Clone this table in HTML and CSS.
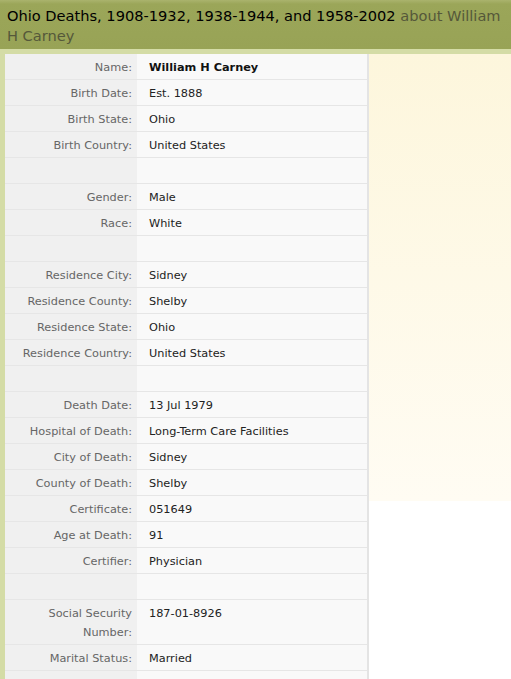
FILE: index.html
```html
<!DOCTYPE html>
<html>
<head>
<meta charset="utf-8">
<link rel="stylesheet" href="styles.css">
</head>
<body>
<h1 class="title"><span class="coll">Ohio Deaths, 1908-1932, 1938-1944, and 1958-2002</span> <span class="about">about William</span> <span class="about">H Carney</span></h1>
<div class="main">
  <table class="record">
    <tr><th>Name:</th><td class="name">William H Carney</td></tr>
    <tr><th>Birth Date:</th><td>Est. 1888</td></tr>
    <tr><th>Birth State:</th><td>Ohio</td></tr>
    <tr><th>Birth Country:</th><td>United States</td></tr>
    <tr class="blank"><th></th><td></td></tr>
    <tr><th>Gender:</th><td>Male</td></tr>
    <tr><th>Race:</th><td>White</td></tr>
    <tr class="blank"><th></th><td></td></tr>
    <tr><th>Residence City:</th><td>Sidney</td></tr>
    <tr><th>Residence County:</th><td>Shelby</td></tr>
    <tr><th>Residence State:</th><td>Ohio</td></tr>
    <tr><th>Residence Country:</th><td>United States</td></tr>
    <tr class="blank"><th></th><td></td></tr>
    <tr><th>Death Date:</th><td>13 Jul 1979</td></tr>
    <tr><th>Hospital of Death:</th><td>Long-Term Care Facilities</td></tr>
    <tr><th>City of Death:</th><td>Sidney</td></tr>
    <tr><th>County of Death:</th><td>Shelby</td></tr>
    <tr><th>Certificate:</th><td>051649</td></tr>
    <tr><th>Age at Death:</th><td>91</td></tr>
    <tr><th>Certifier:</th><td>Physician</td></tr>
    <tr class="blank"><th></th><td></td></tr>
    <tr><th>Social Security Number:</th><td>187-01-8926</td></tr>
    <tr><th>Marital Status:</th><td>Married</td></tr>
    <tr class="blank"><th></th><td></td></tr>
  </table>
</div>
</body>
</html>
```
FILE: styles.css
```css
html, body {
  margin: 0;
  padding: 0;
  background: #fff;
}
body {
  font-family: "DejaVu Sans", Verdana, sans-serif;
}
.title {
  margin: 0;
  padding: 6px 0 3px 7px;
  font-size: 14.6px;
  line-height: 20px;
  font-weight: normal;
  color: #000;
  background: linear-gradient(#aab36d 0, #9ba659 4px, #98a356 100%);
  border-bottom: 5px solid #d4dca6;
}
.coll {
  color: #000;
}
.about {
  color: #55583a;
}
.main {
  border-left: 5px solid #d4dca6;
  background: linear-gradient(#fdf6dc, #fffcf3 447px, #fff 447px) no-repeat;
  background-size: 100% 447px;
  min-height: 640px;
}
.record {
  border-collapse: collapse;
  width: 364px;
  border-right: 2px solid #e4e4e4;
  font-size: 11.3px;
}
.record th, .record td {
  height: 19px;
  line-height: 19px;
  padding: 4px 0 2px;
  border-bottom: 1px solid #e6e6e6;
  vertical-align: top;
}
.record th {
  width: 127px;
  padding-right: 5px;
  text-align: right;
  font-weight: normal;
  color: #666;
  background: #f0f0f0;
}
.record td {
  padding-left: 12px;
  color: #222;
  background: #f9f9f9;
}
.record td.name {
  font-weight: bold;
  color: #111;
}
```
